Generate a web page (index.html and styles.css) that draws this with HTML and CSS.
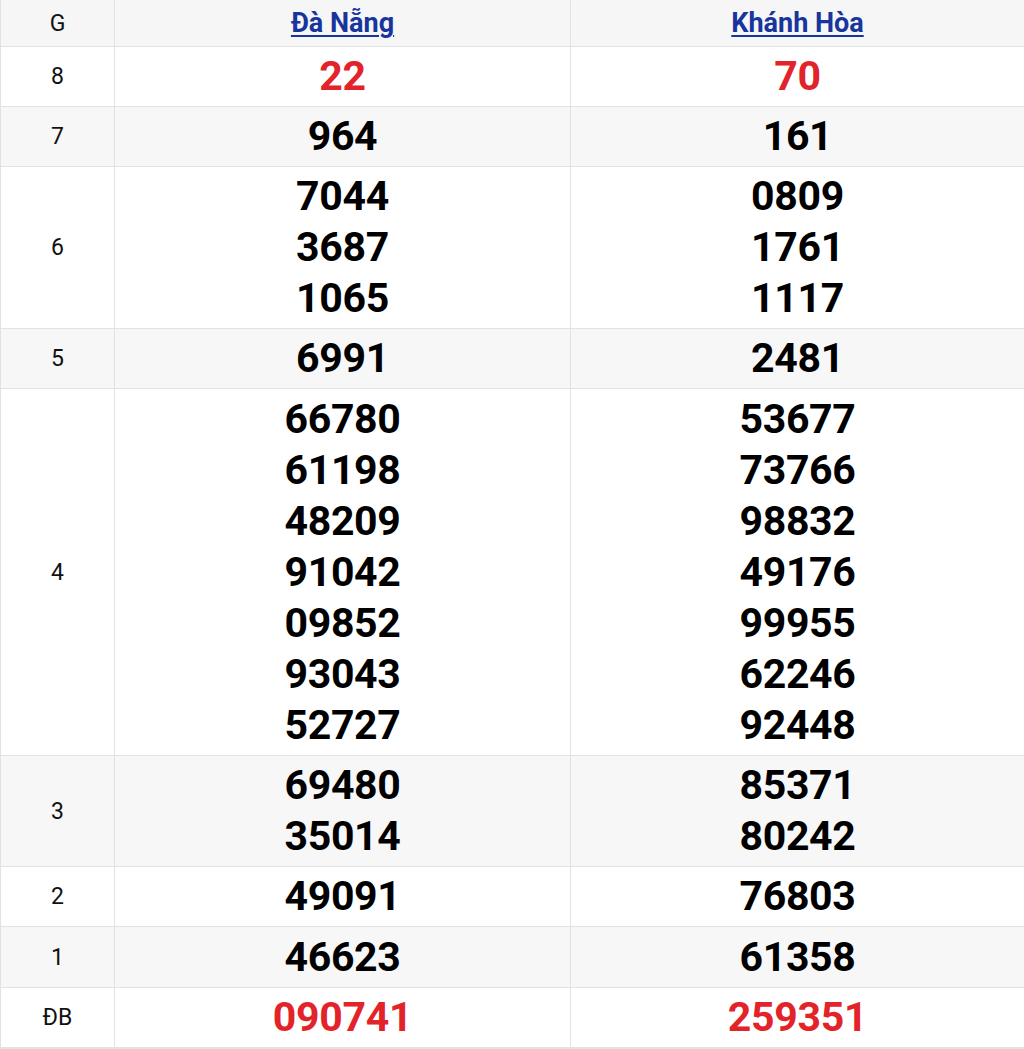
FILE: index.html
```html
<!DOCTYPE html>
<html lang="vi">
<head>
<meta charset="utf-8">
<title>KQXS</title>
<link rel="stylesheet" href="styles.css">
</head>
<body>
<table class="kq">
  <colgroup><col class="c-g"><col class="c-p"><col class="c-p2"></colgroup>
  <thead>
    <tr class="head">
      <th class="lbl">G</th>
      <th><a href="#" class="prov">Đà Nẵng</a></th>
      <th><a href="#" class="prov">Khánh Hòa</a></th>
    </tr>
  </thead>
  <tbody>
    <tr class="w"><td class="lbl">8</td><td class="num red">22</td><td class="num red">70</td></tr>
    <tr class="g"><td class="lbl">7</td><td class="num">964</td><td class="num">161</td></tr>
    <tr class="w"><td class="lbl">6</td>
      <td class="num"><div>7044</div><div>3687</div><div>1065</div></td>
      <td class="num"><div>0809</div><div>1761</div><div>1117</div></td></tr>
    <tr class="g"><td class="lbl">5</td><td class="num">6991</td><td class="num">2481</td></tr>
    <tr class="w"><td class="lbl">4</td>
      <td class="num tall"><div>66780</div><div>61198</div><div>48209</div><div>91042</div><div>09852</div><div>93043</div><div>52727</div></td>
      <td class="num tall"><div>53677</div><div>73766</div><div>98832</div><div>49176</div><div>99955</div><div>62246</div><div>92448</div></td></tr>
    <tr class="g"><td class="lbl">3</td>
      <td class="num"><div>69480</div><div>35014</div></td>
      <td class="num"><div>85371</div><div>80242</div></td></tr>
    <tr class="w"><td class="lbl">2</td><td class="num">49091</td><td class="num">76803</td></tr>
    <tr class="g"><td class="lbl">1</td><td class="num tall">46623</td><td class="num tall">61358</td></tr>
    <tr class="w"><td class="lbl">ĐB</td><td class="num red">090741</td><td class="num red">259351</td></tr>
  </tbody>
</table>
<div class="tabs"><span class="tab active"></span><span class="tab"></span><span class="tab"></span><span class="tab"></span><span class="tab"></span><span class="tab"></span><span class="tab"></span><span class="tab"></span></div>
</body>
</html>
```

FILE: styles.css
```css
html, body {
  margin: 0;
  padding: 0;
  background: #ffffff;
  font-family: Roboto, "Liberation Sans", Arial, sans-serif;
  color: #000;
}

.kq {
  width: 1024px;
  border-collapse: collapse;
  table-layout: fixed;
}

.c-g { width: 114px; }
.c-p { width: 456px; }
.c-p2 { width: 454px; }

.kq th, .kq td {
  border: 1px solid #e2e2e2;
  text-align: center;
  vertical-align: middle;
  padding: 0;
}

.kq tr:first-child th { border-top: none; }

.head th {
  height: 46px;
  background: #f6f6f6;
  font-weight: 400;
}

.prov {
  font-size: 27px;
  font-weight: 700;
  color: #17359c;
  text-decoration: underline;
  text-underline-offset: 3px;
  text-decoration-thickness: 2px;
}

.lbl {
  font-size: 23px;
  font-weight: 400;
  color: #111;
}

.head th.lbl { font-weight: 400; font-size: 23px; }

.w { background: #ffffff; }
.g { background: #f7f7f7; }

.kq td.num {
  font-size: 41px;
  font-weight: 700;
  line-height: 51px;
  padding: 4px 0 4px;
  letter-spacing: -0.3px;
}

.kq td.num.tall { padding: 5px 0 4px; }

.red { color: #e3232a; }

.tabs {
  display: flex;
  height: 3px;
  border-top: 1px solid #e2e2e2;
}

.tab {
  flex: 0 0 62px;
  border-right: 1px solid #e8e8e8;
  background: #f4f4f4;
}

.tab.active { background: #8a1c1c; }
```
